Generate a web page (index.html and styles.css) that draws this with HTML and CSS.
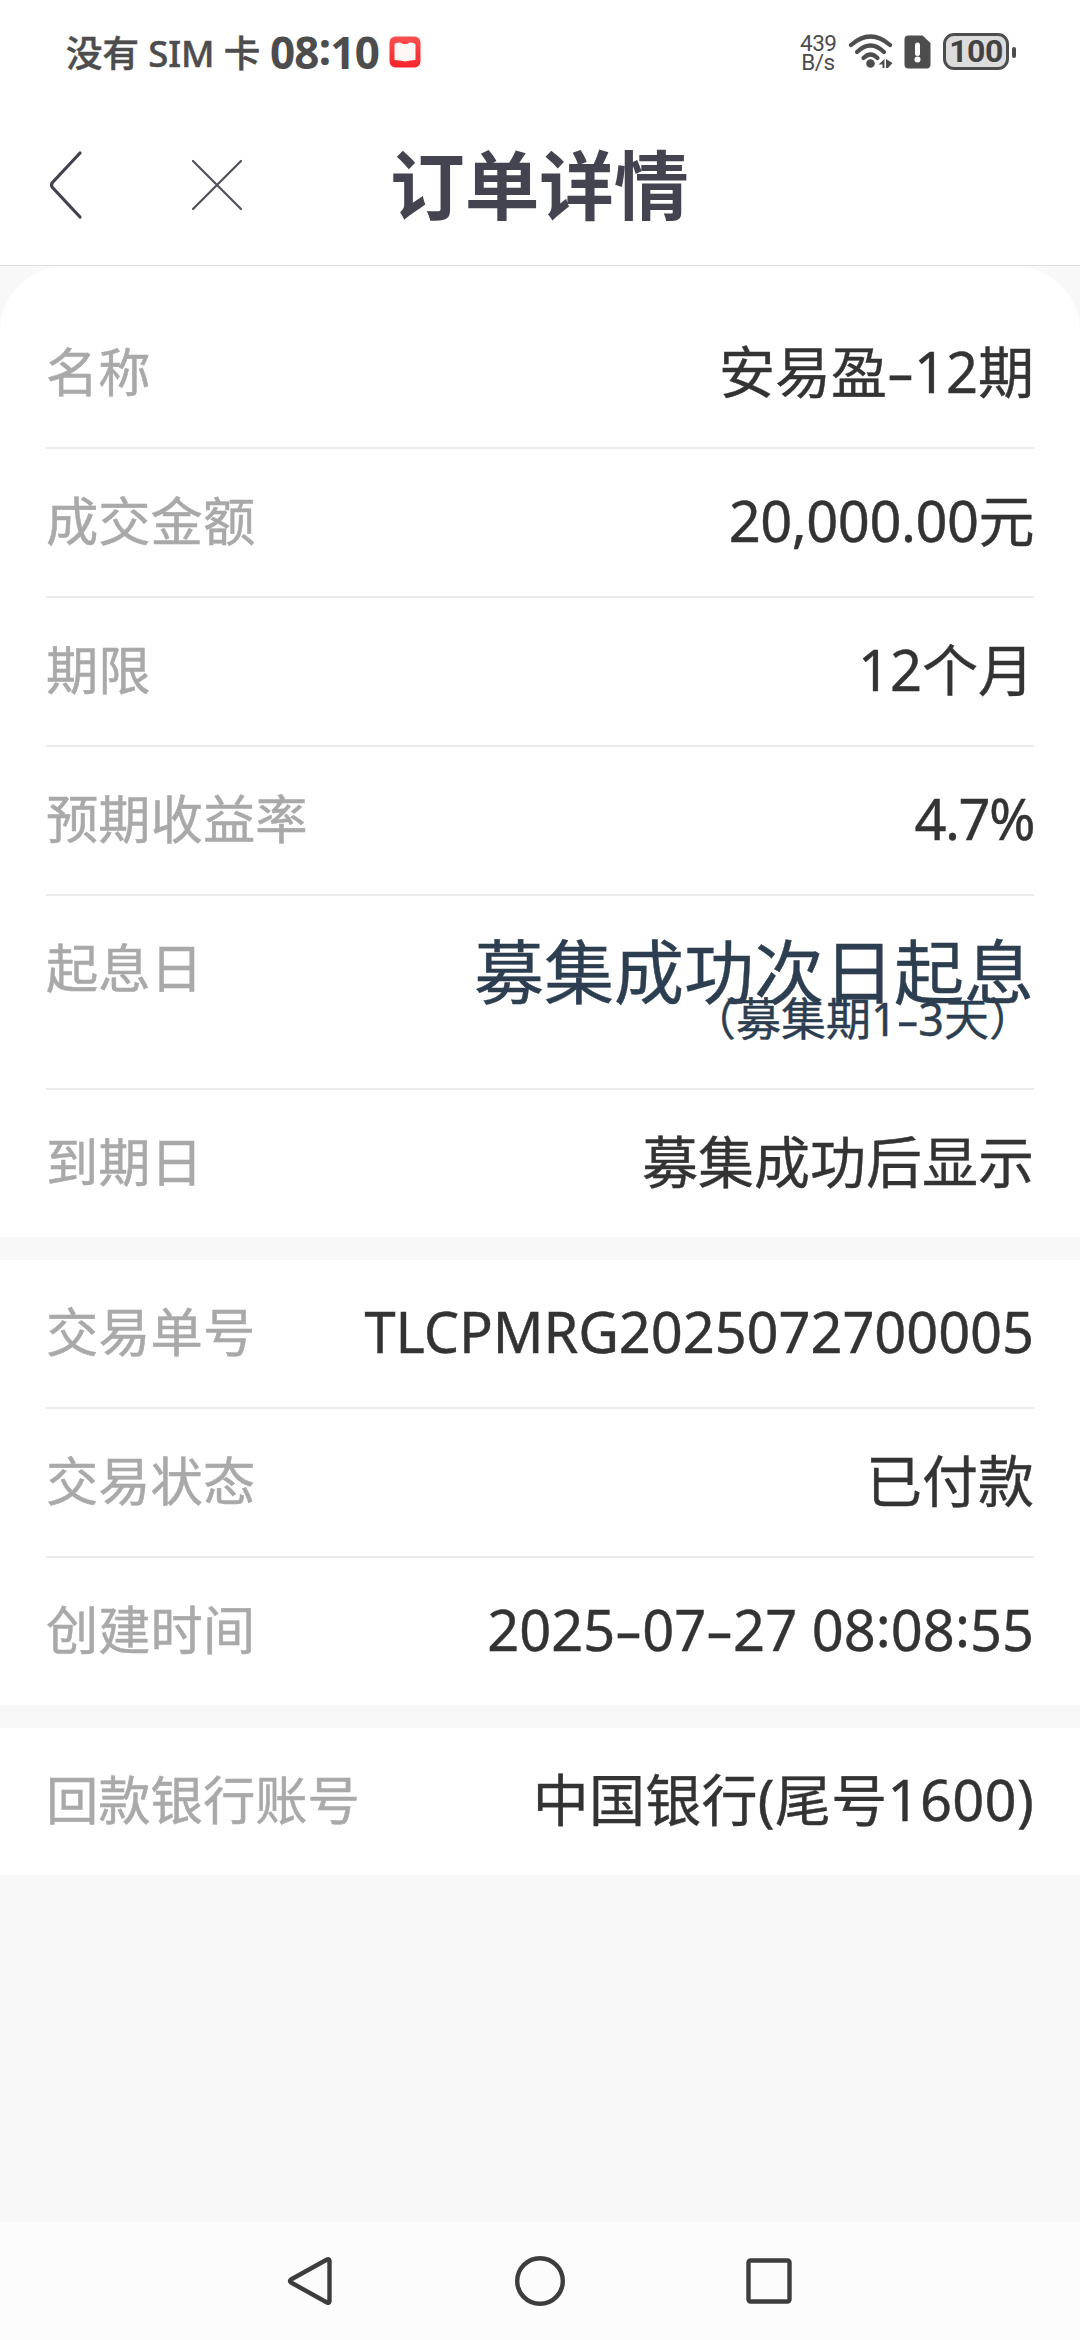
FILE: index.html
```html
<!DOCTYPE html>
<html lang="zh-CN">
<head>
<meta charset="utf-8">
<title>订单详情</title>
<link rel="stylesheet" href="styles.css">
</head>
<body>
<div class="screen">
  <div class="status">
    <span class="carrier">没有 SIM 卡</span>
    <span class="clock">08<span class="colon">:</span>10</span>
    <svg class="app" width="32" height="32" viewBox="0 0 32 32">
      <defs><linearGradient id="red" x1="0" y1="0" x2="0" y2="1"><stop offset="0" stop-color="#fb5050"/><stop offset="1" stop-color="#f5232b"/></linearGradient></defs>
      <rect x=".5" y=".5" width="31" height="31" rx="6" fill="url(#red)"/>
      <path d="M5.500 8.500Q6 6.500 11 6.500L14 8H18L21 6.500Q26 6.500 26.500 8.500V24Q21 24 16 25.500Q11 24 5.500 24Z" fill="#fff7f4"/>
    </svg>
    <div class="spacer"></div>
    <div class="speed"><span>439</span><span>B/s</span></div>
    <svg class="wifi" width="46" height="38" viewBox="0 0 46 38">
      <g fill="none" stroke="#4d4d4d" stroke-width="4.200" stroke-linecap="round"><path d="M3 13Q22.500-4 42 13"/><path d="M9 20Q22.500 7 36 20"/><path d="M15.500 26Q22.500 19 29.500 26"/></g>
      <circle cx="22.500" cy="31.500" r="4.300" fill="#4d4d4d"/>
      <path d="M30.500 32.500L36.500 27V36H34.500V32.500ZM38 27L44.500 31L40 36H38Z" fill="#4d4d4d"/>
    </svg>
    <svg class="sim" width="27" height="34" viewBox="0 0 27 34">
      <path d="M4 .500H18.500L26.500 8V29.500A4 4 0 0 1 22.500 33.500H4.500A4 4 0 0 1 .500 29.500V4.500A4 4 0 0 1 4.500 .500Z" fill="#4d4d4d"/>
      <path d="M13.500 10V18.500" stroke="#fff" stroke-width="5" stroke-linecap="round"/><circle cx="13.500" cy="24.500" r="3" fill="#fff"/>
    </svg>
    <div class="battery">100</div><div class="nub"></div>
  </div>
  <header class="bar">
    <svg class="back" width="38" height="72" viewBox="0 0 38 72"><path d="M34 4L6.500 33.500Q4.500 36 6.500 38.500L34 68" fill="none" stroke="#42414e" stroke-width="3.200" stroke-linecap="round"/></svg>
    <svg class="close" width="54" height="54" viewBox="0 0 54 54"><path d="M3 3L51 51M51 3L3 51" stroke="#51505c" stroke-width="2.200" stroke-linecap="round"/></svg>
    <h1 class="title">订单详情</h1>
  </header>
  <main class="main">
    <section class="group first">
      <div class="row"><span class="label">名称</span><span class="value">安易盈<span class="dash">-</span>12期</span></div>
      <div class="row"><span class="label">成交金额</span><span class="value amount">20,000.00元</span></div>
      <div class="row"><span class="label">期限</span><span class="value">12个月</span></div>
      <div class="row"><span class="label">预期收益率</span><span class="value rate">4.7%</span></div>
      <div class="row tall"><span class="label">起息日</span><span class="start"><span class="big">募集成功次日起息</span><span class="note">（募集期1<span class="dash">-</span>3天）</span></span></div>
      <div class="row"><span class="label">到期日</span><span class="value">募集成功后显示</span></div>
    </section>
    <section class="group">
      <div class="row"><span class="label">交易单号</span><span class="value serial">TLCPMRG2025072700005</span></div>
      <div class="row"><span class="label">交易状态</span><span class="value">已付款</span></div>
      <div class="row"><span class="label">创建时间</span><span class="value">2025<span class="dash">-</span>07<span class="dash">-</span>27 08<span class="colon">:</span>08<span class="colon">:</span>55</span></div>
    </section>
    <section class="group">
      <div class="row"><span class="label">回款银行账号</span><span class="value bank">中国银行(尾号1600)</span></div>
    </section>
  </main>
  <nav class="nav">
    <svg width="52" height="52" viewBox="0 0 52 52"><path d="M44.500 5.500V46.500Q44 48.500 42 47.500L6 27.500Q4 26 6 24.500L42 4.500Q44 3.500 44.500 5.500Z"/></svg>
    <svg width="52" height="52" viewBox="0 0 52 52"><circle cx="26" cy="26" r="22.800"/></svg>
    <svg width="52" height="52" viewBox="0 0 52 52"><rect x="5.500" y="5.500" width="41" height="41" rx="2"/></svg>
  </nav>
</div>
</body>
</html>
```
FILE: styles.css
```css
* { box-sizing: border-box; }
body { margin: 0; font-family: "Noto Sans", "Noto Sans CJK SC", sans-serif; color: #333; background: #f8f8f8; }
.screen { width: 1080px; height: 2340px; display: flex; flex-direction: column; }
svg { display: block; flex: none; }

.status { height: 104px; background: #fff; display: flex; align-items: center; padding: 0 64px 0 66px; color: #4d4d4d; white-space: nowrap; }
.carrier { font-size: 36.500px; font-weight: 500; width: 204px; -webkit-text-stroke: .5px #4d4d4d; letter-spacing: -.1px; padding-bottom: 2px; }
.clock { font-size: 44px; font-weight: 700; letter-spacing: -.8px; width: 119px; }
.colon { position: relative; top: -.08em; }
.spacer { flex: 1; }
.speed { display: flex; flex-direction: column; font: 22.500px/19px Roboto, sans-serif; letter-spacing: -.5px; width: 36px; text-align: center; margin-right: 12px; padding-top: 1px; }
.wifi { margin-right: 10px; margin-top: -2px; }
.sim { margin-right: 12px; margin-top: -1px; }
.battery { width: 66px; height: 37px; border: 3px solid #4d4d4d; border-radius: 11px; background: #dcdcdc; font: 700 32px/31px Roboto, sans-serif; letter-spacing: -.5px; text-align: center; color: #424242; margin-top: -1px; }
.nub { width: 4px; height: 11px; margin-left: 3px; border-radius: 2px; background: #4d4d4d; }

.bar { height: 162px; background: #fff; border-bottom: 1px solid #dedede; display: grid; grid-template-columns: 144px 200px 1fr; align-items: center; padding: 0 46px; }
.title { margin: 0; font-size: 74.700px; line-height: 100px; font-weight: 700; color: #444350; white-space: nowrap; }

.main { flex: 1; display: flex; flex-direction: column; gap: 23px; background: #f8f8f8; }
.group { background: #fff; padding: 0 46px; }
.first { padding-top: 34px; border-radius: 66px 66px 0 0; }
.row { height: 149px; border-bottom: 2px solid #ebebeb; display: flex; justify-content: space-between; line-height: 143px; white-space: nowrap; }
.row:last-child { height: 147px; border-bottom: 0; }
.row.tall { height: 194px; }
.label { font-size: 52.300px; color: #a9a9a9; -webkit-text-stroke: .5px #a9a9a9; }
.value { font-size: 56px; line-height: 142px; -webkit-text-stroke: .4px #333; }
.amount { letter-spacing: -.5px; }
.rate { letter-spacing: -1.500px; }
.serial { letter-spacing: -.1px; }
.bank { letter-spacing: .3px; }
.dash { display: inline-block; width: .48em; text-align: center; transform: scaleX(1.550); }
.start { display: flex; flex-direction: column; align-items: flex-end; padding-top: 53px; color: #2c3e50; -webkit-text-stroke: .4px #2c3e50; }
.big { font-size: 70px; line-height: 47px; }
.note { font-size: 45px; line-height: 46px; }

.nav { height: 118px; background: #fcfcfc; display: flex; justify-content: center; align-items: center; gap: 177px; }
.nav svg { fill: none; stroke: #3d3d3d; stroke-width: 4.400px; stroke-linejoin: round; }
```
